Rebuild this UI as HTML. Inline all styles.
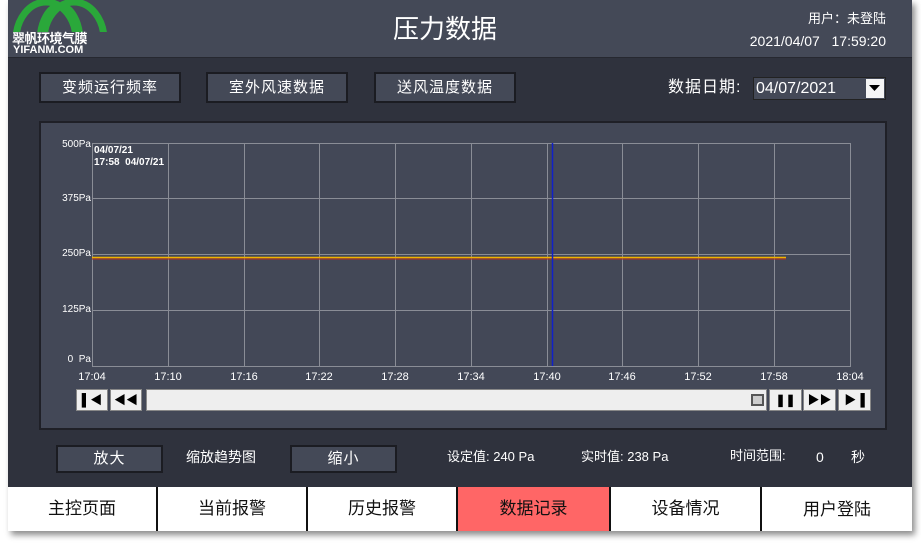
<!DOCTYPE html>
<html><head><meta charset="utf-8"><style>
*{margin:0;padding:0;box-sizing:border-box}
body{width:921px;height:545px;background:#fff;position:relative;overflow:hidden;font-family:"Liberation Sans","Noto Sans CJK SC",sans-serif;}
.a{position:absolute;line-height:1.15}
#scr{left:8px;top:0;width:904px;height:531px;background:#2f323d;box-shadow:3px 4px 6px rgba(0,0,0,.45)}
#hdr{left:8px;top:0;width:904px;height:58px;background:#444957;border-bottom:1px solid #262830}
.btn{position:absolute;background:#444957;border:2px solid #1b1c22;color:#fff;font-size:15px;text-align:center;letter-spacing:1px}
.w{color:#fff}
.tab{position:absolute;top:487px;height:44px;background:#fff;border-right:2px solid #111;font-size:17px;text-align:center;line-height:44px;color:#111}
.yl{position:absolute;font-size:10px;color:#fff;text-align:right;width:50px}
.xl{position:absolute;font-size:11px;color:#fff;top:371px;width:40px;text-align:center}
.pb{position:absolute;top:389px;height:22px;background:#f0f0f0;border:1px solid #888;font-size:12px;text-align:center;line-height:20px;font-weight:bold;color:#000}
</style></head><body>
<div id="scr" class="a"></div>
<div id="hdr" class="a"></div>
<svg class="a" style="left:10px;top:0" width="100" height="32">
<g fill="none" stroke="#2aa83a" stroke-width="7">
<ellipse cx="36" cy="40" rx="30" ry="38"/>
<ellipse cx="64" cy="40" rx="30" ry="38"/>
<ellipse cx="50" cy="42" rx="20" ry="36"/>
</g>
</svg>
<div class="a w" style="left:12px;top:32px;font-size:13px;line-height:13px;font-weight:bold;letter-spacing:-0.5px">翠帆环境气膜</div>
<div class="a w" style="left:13px;top:45px;font-size:11px;line-height:11px;font-weight:bold">YIFANM.COM</div>
<div class="a w" style="left:393px;top:15px;font-size:26px">压力数据</div>
<div class="a w" style="left:790px;top:12px;width:96px;text-align:right;font-size:13px">用户：未登陆</div>
<div class="a w" style="left:730px;top:33px;width:156px;text-align:right;font-size:14px">2021/04/07 &nbsp;&nbsp;17:59:20</div>

<div class="btn" style="left:39px;top:72px;width:142px;height:31px;line-height:27px">变频运行频率</div>
<div class="btn" style="left:206px;top:72px;width:142px;height:31px;line-height:27px">室外风速数据</div>
<div class="btn" style="left:374px;top:72px;width:142px;height:31px;line-height:27px">送风温度数据</div>
<div class="a w" style="left:668px;top:79px;font-size:16px;letter-spacing:1px">数据日期:</div>
<div class="a" style="left:753px;top:77px;width:133px;height:23px;background:#444957;border:1px solid #222"></div>
<div class="a w" style="left:756px;top:80px;font-size:16px">04/07/2021</div>
<div class="a" style="left:866px;top:79px;width:18px;height:19px;background:#f5f5f5"></div>
<svg class="a" style="left:869px;top:85px" width="12" height="8"><path d="M0 0H11L5.5 6Z" fill="#000"/></svg>

<div class="a" style="left:39px;top:121px;width:848px;height:309px;background:#434857;border:2px solid #1f2027"></div>
<svg class="a" style="left:0;top:0" width="921" height="545">
<g stroke="#8a8d96" stroke-width="1">
<path d="M92.5 143V366M168.5 143V366M244.5 143V366M319.5 143V366M395.5 143V366M471.5 143V366M547.5 143V366M622.5 143V366M698.5 143V366M774.5 143V366M850.5 143V366"/>
<path d="M92 143.5H851M92 198.5H851M92 254.5H851M92 310.5H851M92 366.5H851"/>
</g>
<path d="M92 257.5H786" stroke="#f0b400" stroke-width="1.5"/>
<path d="M92 259H786" stroke="#b03020" stroke-width="1"/>
<path d="M552.5 143V366" stroke="#1020c8" stroke-width="1.5"/>
</svg>
<div class="yl" style="left:41px;top:139px">500Pa</div>
<div class="yl" style="left:41px;top:193px">375Pa</div>
<div class="yl" style="left:41px;top:248px">250Pa</div>
<div class="yl" style="left:41px;top:304px">125Pa</div>
<div class="yl" style="left:41px;top:354px">0 &nbsp;Pa</div>
<div class="a w" style="left:94px;top:145px;font-size:10px;font-weight:bold;line-height:12px">04/07/21<br>17:58 &nbsp;04/07/21</div>
<div class="xl" style="left:72px">17:04</div><div class="xl" style="left:148px">17:10</div><div class="xl" style="left:224px">17:16</div><div class="xl" style="left:299px">17:22</div><div class="xl" style="left:375px">17:28</div><div class="xl" style="left:451px">17:34</div><div class="xl" style="left:527px">17:40</div><div class="xl" style="left:602px">17:46</div><div class="xl" style="left:678px">17:52</div><div class="xl" style="left:754px">17:58</div><div class="xl" style="left:830px">18:04</div>
<div class="pb" style="left:76px;width:32px">&#9612;◀</div>
<div class="pb" style="left:110px;width:32px">◀◀</div>
<div class="pb" style="left:146px;width:621px;background:#eee"></div>
<div class="a" style="left:751px;top:394px;width:13px;height:12px;border:2px solid #555;background:#ccc"></div>
<div class="pb" style="left:769px;width:33px">❚❚</div>
<div class="pb" style="left:803px;width:33px">▶▶</div>
<div class="pb" style="left:838px;width:33px">▶&#9616;</div>

<div class="btn" style="left:56px;top:445px;width:107px;height:28px;line-height:24px">放大</div>
<div class="a w" style="left:186px;top:449px;font-size:14px">缩放趋势图</div>
<div class="btn" style="left:290px;top:445px;width:107px;height:28px;line-height:24px">缩小</div>
<div class="a w" style="left:447px;top:450px;font-size:13px">设定值: 240 Pa</div>
<div class="a w" style="left:581px;top:450px;font-size:13px">实时值: 238 Pa</div>
<div class="a w" style="left:730px;top:449px;font-size:13px">时间范围:</div>
<div class="a w" style="left:816px;top:449px;font-size:14px">0</div>
<div class="a w" style="left:851px;top:449px;font-size:14px">秒</div>

<div class="tab" style="left:8px;width:150px">主控页面</div>
<div class="tab" style="left:158px;width:150px">当前报警</div>
<div class="tab" style="left:308px;width:150px">历史报警</div>
<div class="tab" style="left:458px;width:153px;background:#ff6666">数据记录</div>
<div class="tab" style="left:611px;width:151px">设备情况</div>
<div class="tab" style="left:762px;width:150px;border-right:none;line-height:46px">用户登陆</div>
</body></html>
